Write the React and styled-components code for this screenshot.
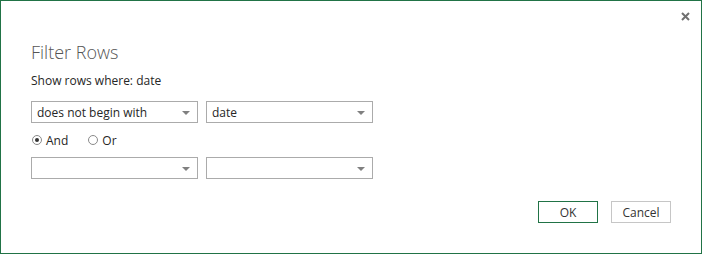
import React from "react";
import styled, { createGlobalStyle } from "styled-components";

const Global = createGlobalStyle`
  html, body {
    margin: 0;
    padding: 0;
    background: #ffffff;
  }
  body {
    font-family: "Segoe UI", "Open Sans", "Liberation Sans", sans-serif;
  }
`;

const Window = styled.div`
  position: relative;
  width: 702px;
  height: 254px;
  box-sizing: border-box;
  border: 1px solid #217346;
  background: #fff;
  padding: 39px 30px 0 30px;
  display: flex;
  flex-direction: column;
`;

const Close = styled.button`
  position: absolute;
  top: 8px;
  right: 9px;
  width: 14px;
  height: 14px;
  padding: 0;
  border: none;
  background: transparent;
  display: flex;
  align-items: center;
  justify-content: center;
`;

const Title = styled.h1`
  margin: 0;
  font-size: 18px;
  line-height: 24px;
  font-weight: 300;
  color: #555;
`;

const Subtitle = styled.div`
  margin-top: 9px;
  font-size: 12px;
  line-height: 16px;
  color: #262626;
`;

const Row = styled.div`
  display: flex;
  gap: 8px;
  margin-top: ${(p) => p.$top}px;
`;

const Select = styled.div`
  width: 167px;
  height: 22px;
  box-sizing: border-box;
  border: 1px solid #ababab;
  display: flex;
  align-items: center;
  justify-content: space-between;
  padding: 0 7px 0 5px;
  font-size: 12px;
  color: #262626;
`;

const Arrow = styled.span`
  width: 0;
  height: 0;
  border-left: 4px solid transparent;
  border-right: 4px solid transparent;
  border-top: 4px solid #808080;
  margin-top: 1px;
`;

const RadioRow = styled.div`
  display: flex;
  align-items: center;
  margin-top: 10px;
  height: 14px;
  padding-left: 1px;
`;

const RadioLabel = styled.label`
  display: flex;
  align-items: center;
  gap: 4px;
  font-size: 12px;
  color: #262626;
  margin-right: ${(p) => p.$gap || 0}px;
`;

const Circle = styled.span`
  width: 10px;
  height: 10px;
  box-sizing: border-box;
  border: 1px solid #8a8a8a;
  border-radius: 50%;
  display: flex;
  align-items: center;
  justify-content: center;
  &::after {
    content: "";
    display: ${(p) => (p.$checked ? "block" : "none")};
    width: 4px;
    height: 4px;
    border-radius: 50%;
    background: #333;
  }
`;

const Footer = styled.div`
  display: flex;
  justify-content: flex-end;
  gap: 13px;
  margin-top: 22px;
`;

const Button = styled.button`
  width: 60px;
  height: 22px;
  box-sizing: border-box;
  background: #fff;
  border: 1px solid ${(p) => (p.$primary ? "#217346" : "#c6c6c6")};
  font-family: inherit;
  font-size: 12px;
  color: #333;
  padding: 0;
`;

function Dropdown({ value }) {
  return (
    <Select>
      <span>{value}</span>
      <Arrow />
    </Select>
  );
}

export default function App() {
  return (
    <>
      <Global />
      <Window>
        <Close aria-label="Close">
          <svg width="9" height="9" viewBox="0 0 9 9">
            <path d="M1 1L8 8M8 1L1 8" stroke="#707070" strokeWidth="2" />
          </svg>
        </Close>
        <Title>Filter Rows</Title>
        <Subtitle>Show rows where: date</Subtitle>
        <Row $top={12}>
          <Dropdown value="does not begin with" />
          <Dropdown value="date" />
        </Row>
        <RadioRow>
          <RadioLabel $gap={20}>
            <Circle $checked />
            And
          </RadioLabel>
          <RadioLabel>
            <Circle />
            Or
          </RadioLabel>
        </RadioRow>
        <Row $top={10}>
          <Dropdown value="" />
          <Dropdown value="" />
        </Row>
        <Footer>
          <Button $primary>OK</Button>
          <Button>Cancel</Button>
        </Footer>
      </Window>
    </>
  );
}
